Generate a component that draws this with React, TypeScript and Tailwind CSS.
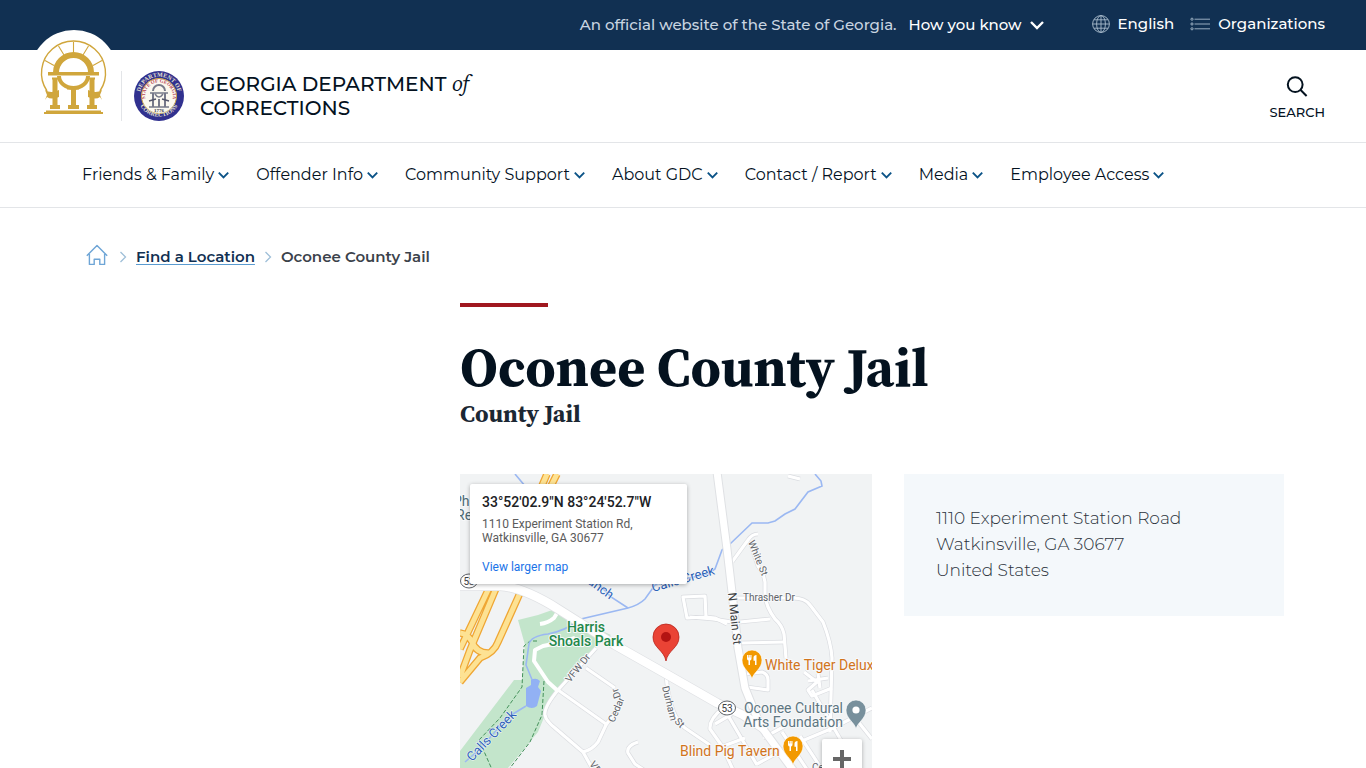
/**
 * Location page: state banner, department header, main navigation,
 * breadcrumb and the location details with an embedded map.
 */

import { clsx } from 'clsx'

const SANS = "font-['Montserrat','Inter',sans-serif]"
const SERIF = "font-['Source_Serif_Pro','Source_Serif_4','Liberation_Serif',serif]"

// ============================================
// Data
// ============================================

const NAV_ITEMS = [
  'Friends & Family',
  'Offender Info',
  'Community Support',
  'About GDC',
  'Contact / Report',
  'Media',
  'Employee Access',
]

const ADDRESS = ['1110 Experiment Station Road', 'Watkinsville, GA 30677', 'United States']

const MINOR_ROADS = [
  'M136 174 L98 216 Q84 233 85 241 Q86 247 95 254 L123 278 L133 296 L150 330',
  'M126 194 L155 214 M158 234 L146 251 L138 268 Q132 276 123 278',
  'M98 216 L146 250',
  'M178 268 Q166 272 168 279 L175 290 L190 300',
  'M298 60 Q292 60 288 66 L272 88',
  'M290 68 L298 92 Q304 100 305 108 L305 121 Q306 133 315 145 Q322 151 324 160 L326 184',
  'M275 124 L333 124 Q345 124 350 131 L363 148 Q371 168 372 184 L370 258',
  'M223 123 L245 122 L246 143 L227 144 Z M246 143 L255 144 L267 150',
  'M230 143 L253 145 L272 148 M280 148 L310 145',
  'M281 169 L325 168',
  'M286 200 L302 198 Q308 200 308 206 L308 216 L287 213',
  'M344 198 L357 208 L348 216 L352 222 L372 214 M348 207 L368 204 M358 200 L360 214',
  'M206 199 L207 210 Q211 243 225 254 L250 271',
  'M263 234 Q249 245 250 255 L262 272 L275 300',
  'M266 238 L297 291 M255 250 L272 240',
  'M258 274 L285 264 M297 290 L330 272 L373 254 L412 234',
  'M303 264 L325 252 M322 258 L350 300',
  'M352 216 L382 268 M392 240 L412 265',
  'M340 262 L365 300 M328 2 L340 5',
]

const CREEK = [
  'M55 0 L65 12 L90 60 L151 123 L168 134',
  'M355 0 L361 7 L362 12 L348 18 L335 35 L325 40 L315 47 L308 49 L292 49 L270 70 L262 76 L255 95 L248 100 L195 111 L185 125 Q179 131 168 134 L121 145 Q105 157 88 160 Q71 162 69 170 L66 191 L73 208',
  'M66 232 L48 243 L20 275 L5 288',
]

const HIGHWAY =
  'M97 0 L90 14 M87 0 L81 14 M37 112 L10 176 L0 203 M30 112 L0 175 M60 119 L38 168 Q34 179 20 184 L0 208 M0 159 Q8 160 12 168 Q17 180 30 179'

// ============================================
// Icons
// ============================================

function ChevronDown({ className }: { className?: string }) {
  return (
    <svg viewBox="0 0 14 10" className={className} fill="none" stroke="currentColor" strokeWidth="2.4" aria-hidden="true">
      <path d="M1 2 L7 8 L13 2" />
    </svg>
  )
}

function Separator() {
  return (
    <svg viewBox="0 0 8 12" className="h-3 w-2 text-[#9fbfd8]" fill="none" stroke="currentColor" strokeWidth="1.3" aria-hidden="true">
      <path d="M1.5 1 L6.5 6 L1.5 11" />
    </svg>
  )
}

function GlobeIcon() {
  return (
    <svg viewBox="0 0 18 18" className="size-[18px] text-[#a9bccd]" fill="none" stroke="currentColor" strokeWidth="0.9" aria-hidden="true">
      <circle cx="9" cy="9" r="8.4" />
      <ellipse cx="9" cy="9" rx="4.4" ry="8.4" />
      <path d="M9 .6V17.4M.6 9H17.4M1.8 4.8H16.2M1.8 13.2H16.2" />
    </svg>
  )
}

function ListIcon() {
  return (
    <svg viewBox="0 0 20 14" className="h-[14px] w-5 text-[#a9bccd]" fill="none" stroke="currentColor" strokeWidth="0.9" aria-hidden="true">
      <circle cx="2" cy="2.2" r="1.1" />
      <circle cx="2" cy="7" r="1.1" />
      <circle cx="2" cy="11.8" r="1.1" />
      <path d="M4.5 2.2H20M4.5 7H20M4.5 11.8H20" />
    </svg>
  )
}

function HomeIcon() {
  return (
    <svg viewBox="0 0 22 22" className="size-[22px] text-[#6ea5d6]" fill="none" stroke="currentColor" strokeWidth="1.4" strokeLinejoin="round" aria-hidden="true">
      <path d="M.8 11.8 L11 1.4 L21.2 11.8 M3.4 10 V20.4 H8.2 V15.2 H13.8 V20.4 H18.6 V10" />
    </svg>
  )
}

function SearchIcon() {
  return (
    <svg viewBox="0 0 22 22" className="size-[22px]" fill="none" stroke="currentColor" strokeWidth="2" aria-hidden="true">
      <circle cx="9.2" cy="8.6" r="7.4" />
      <path d="M14.4 13.8 L20.6 20" />
    </svg>
  )
}

// The arch with its three pillars, on the white disc
function GeorgiaLogo() {
  return (
    <svg viewBox="0 0 88 88" className="size-[88px]" aria-hidden="true">
      <circle cx="44" cy="44" r="44" fill="#fff" />
      <g fill="none" stroke="#d0a63c">
        <path d="M17 61 A32 32 0 1 1 70 61" strokeWidth="1.4" />
        <path d="M15 30.500 L24 35.500 M28.500 16 L34 25 M43.500 12 V24 M58.500 16 L53 25 M72 30.500 L63 35.500" strokeWidth="1.1" />
        <path d="M26 42.500 A17.500 17.500 0 0 1 61 42.500" strokeWidth="6" />
        <path d="M29 46 A14.500 12 0 0 0 58 46" strokeWidth="4" />
      </g>
      <g fill="#d0a63c">
        <path d="M18 42H69V45.500H18Z" />
        <path d="M22 47.500H29V49.500H27.500V75H22.500V49.500H22Z M58 47.500H65V49.500H64.500V75H59.500V49.500H58Z" />
        <path d="M37 56H49V59.500H46V75H41V59.500H37Z" />
        <path d="M20 75H30V79H20Z M38 75H49V79H38Z M57 75H67V79H57Z" />
        <path d="M16 80.500H71V82H73V84H14V82H16Z" />
        <path d="M15 60 Q21 64 29 60 V67 Q21 70 17 67 L15 70 L17 65Z M72 60 Q66 64 58 60 V67 Q66 70 70 67 L72 70 L70 65Z" />
      </g>
    </svg>
  )
}

function DepartmentSeal() {
  return (
    <svg viewBox="0 0 50 50" className="size-[50px]" aria-hidden="true">
      <defs>
        <path id="seal-top" d="M6.500 29 A19 19 0 1 1 43.500 29" />
        <path id="seal-bottom" d="M3.500 27 A21.700 21.700 0 0 0 46.500 27" />
        <path id="seal-inner" d="M14 34 A14 14 0 1 1 36 34" />
      </defs>
      <circle cx="25" cy="25" r="25" fill="#31318f" />
      <circle cx="25" cy="25" r="17.500" fill="#fbf8ef" stroke="#c9a548" strokeWidth="1" />
      <g fontFamily="Liberation Serif, serif" fontWeight="700">
        <text fontSize="6" fill="#e6e3d0"><textPath href="#seal-top" startOffset="50%" textAnchor="middle">DEPARTMENT OF</textPath></text>
        <text fontSize="6" fill="#e6e3d0"><textPath href="#seal-bottom" startOffset="50%" textAnchor="middle">CORRECTIONS</textPath></text>
        <text fontSize="5" fill="#b8475a"><textPath href="#seal-inner" startOffset="50%" textAnchor="middle">STATE OF GEORGIA</textPath></text>
        <text x="25" y="41" fontSize="5" fill="#38384a" textAnchor="middle">1776</text>
      </g>
      <g fill="none" stroke="#777989">
        <path d="M19 20 A6 6 0 0 1 31 20" strokeWidth="2" />
        <path d="M16 22H34M15 36H35" strokeWidth="1.500" />
        <path d="M19 22V36M31 22V36M25 28V36" strokeWidth="2" />
        <path d="M21 23 Q25 29 29 23" strokeWidth="1.500" />
        <path d="M15 30 L22 28 M28 28 L35 30" strokeWidth="1.500" stroke="#55576b" />
      </g>
    </svg>
  )
}

// ============================================
// Map
// ============================================

function Pin({ x, y, fill, kind }: { x: number; y: number; fill: string; kind: 'food' | 'dot' }) {
  return (
    <g transform={`translate(${x} ${y})`}>
      <path d="M0 19 C-1.500 12 -10 9 -10 0 A10 10 0 0 1 10 0 C10 9 1.500 12 0 19Z" fill={fill} stroke="#fff" strokeWidth=".6" />
      {kind === 'food' ? (
        <>
          <path d="M-5 -5H-.5V-1.500Q-.5 .3 -2 .5V5H-3.500V.5Q-5 .3 -5 -1.500Z" fill="#fff" />
          <path d="M-3.600 -5.200V-2.500M-1.900 -5.200V-2.500" stroke={fill} strokeWidth=".6" />
          <path d="M4.500 -5V5H3V.8H1.500V-2.500Q1.700 -5 4.500 -5Z" fill="#fff" />
        </>
      ) : (
        <circle r="3.600" fill="#fff" />
      )}
    </g>
  )
}

function RouteShield({ x, y, label }: { x: number; y: number; label: string }) {
  return (
    <g>
      <ellipse cx={x} cy={y} rx="8.500" ry="7" fill="#fff" stroke="#5f6368" />
      <text x={x} y={y + 4} fontSize="10" fill="#3c4043" textAnchor="middle">{label}</text>
    </g>
  )
}

function MapDrawing() {
  return (
    <svg viewBox="0 0 412 370" preserveAspectRatio="xMidYMin slice" className="h-full w-full" role="img" aria-label="Map of Watkinsville">
      <rect width="412" height="370" fill="#f1f3f4" />

      {/* park */}
      <path d="M58 146 L78 141 L95 135 L151 161 L141 168 L95 219 L85 241 L78 258 L48 294 L0 350 V277 L54 206 H62 L65 171 Z" fill="#c3e5cb" />
      <path d="M77 167 H70 L64 172 L62 213 L40 244 L19 266 L34 300 M84 207 L82 241 L70 268 L50 294" fill="none" stroke="#43915a" strokeWidth="1" strokeDasharray="4 2" />

      {/* water */}
      <g fill="none" stroke="#9bb8f2" strokeWidth="1.600">
        {CREEK.map((d) => <path key={d} d={d} />)}
      </g>
      <path d="M71 206 Q76 203 80 207 L78 213 L81 217 L77 232 Q72 236 66 232 V214 L71 211Z" fill="#92b1f4" />

      {/* side streets: grey casing, then white fill */}
      <g fill="none" stroke="#dadce0" strokeWidth="4.500" strokeLinejoin="round">
        {MINOR_ROADS.map((d) => <path key={d} d={d} />)}
      </g>
      <g fill="none" stroke="#fff" strokeWidth="3.200" strokeLinejoin="round">
        {MINOR_ROADS.map((d) => <path key={d} d={d} />)}
      </g>
      <path d="M115 164 L98 169 L83 172 L75 176 L74 187 L88 208 L98 217 M99 136 L94 144 Q88 149 80 150" fill="none" stroke="#fff" strokeWidth="4" strokeLinejoin="round" />

      {/* highway */}
      <g fill="none">
        <path d={HIGHWAY} stroke="#efa634" strokeWidth="7.500" />
        <path d={HIGHWAY} stroke="#fde293" strokeWidth="5" />
      </g>

      {/* main roads */}
      <g fill="none" strokeLinejoin="round">
        <path d="M0 112 H40 Q63 113 98 135 L155 171 L208 201 L257 229 L283 241 L306 256" stroke="#dfe1e4" strokeWidth="10" />
        <path d="M257 -2 L267 75 L272 118 L278 174 L285 214 L300 251 L333 296 L360 335" stroke="#dfe1e4" strokeWidth="9" />
        <path d="M0 112 H40 Q63 113 98 135 L155 171 L208 201 L257 229 L283 241 L306 256" stroke="#fff" strokeWidth="8.500" />
        <path d="M257 -2 L267 75 L272 118 L278 174 L285 214 L300 251 L333 296 L360 335" stroke="#fff" strokeWidth="7" />
      </g>

      <RouteShield x={9} y={107} label="53" />
      <RouteShield x={267} y={234} label="53" />

      {/* labels, haloed so they stay readable over the roads */}
      <g fontFamily="Roboto, sans-serif" stroke="#f8f9fa" strokeWidth="2" strokeLinejoin="round" style={{ paintOrder: 'stroke' }}>
        <g fontSize="14" fill="#4d6a75">
          <text x="-7" y="32">Ph</text>
          <text x="-4" y="46">Re</text>
        </g>
        <g fontSize="14" fontWeight="500" fill="#23884a" textAnchor="middle">
          <text x="126" y="158">Harris</text>
          <text x="126" y="172">Shoals Park</text>
        </g>
        <g fontSize="13" fill="#2c62b8" strokeWidth="1">
          <text transform="translate(127 109) rotate(36)">anch</text>
          <text transform="translate(193 118) rotate(-16)">Calls Creek</text>
          <text transform="translate(12 288) rotate(-46)">Calls Creek</text>
        </g>
        <g fontSize="10" fill="#5f6368">
          <text transform="translate(288 68) rotate(68)">White St</text>
          <text x="283" y="127">Thrasher Dr</text>
          <text transform="translate(110 209) rotate(-51)">VFW Dr</text>
          <text transform="translate(154 249) rotate(-66)">Cedar</text>
          <text transform="translate(161 223) rotate(-110)">Dr</text>
          <text transform="translate(202 213) rotate(76)">Durham</text>
          <text transform="translate(214 248) rotate(45)">St</text>
          <text transform="translate(129 290) rotate(55)">VFW Dr</text>
          <text x="352" y="297">Ce</text>
        </g>
        <text transform="translate(268 119) rotate(84)" fontSize="12" fill="#3c4043">N Main St</text>
        <g fontSize="14" fill="#d1741c">
          <text x="305" y="196">White Tiger Delux</text>
          <text x="220" y="282">Blind Pig Tavern</text>
        </g>
        <g fontSize="14" fill="#5d7681" textAnchor="end">
          <text x="383" y="239">Oconee Cultural</text>
          <text x="383" y="253">Arts Foundation</text>
        </g>
      </g>

      <Pin x={292} y={186} fill="#f29900" kind="food" />
      <Pin x={333} y={272} fill="#f29900" kind="food" />
      <Pin x={396} y={236} fill="#78909c" kind="dot" />

      <path d="M206 187 C204 176 193 174 193 163 A13 13 0 0 1 219 163 C219 174 208 176 206 187Z" fill="#ea4335" stroke="#b8231a" strokeWidth=".8" />
      <circle cx="206" cy="163" r="5" fill="#b31412" />
    </svg>
  )
}

function LocationMap() {
  return (
    <div className="relative h-[370px] min-w-0 flex-1 overflow-hidden font-['Roboto',sans-serif]">
      <MapDrawing />
      <div className="absolute top-[10px] left-[10px] h-[100px] w-[217px] rounded-xs bg-white px-3 py-[10px] shadow-[0_1px_4px_rgba(0,0,0,0.3)]">
        <p className="text-sm leading-4 font-medium whitespace-nowrap text-[#202124]">33°52'02.9"N 83°24'52.7"W</p>
        <p className="mt-[7px] text-xs leading-[14px] text-[#5b5b5b]">
          1110 Experiment Station Rd,
          <br />
          Watkinsville, GA 30677
        </p>
        <a href="#map" className="mt-[14px] block text-xs leading-4 text-[#1a73e8]">View larger map</a>
      </div>
      <div className="absolute top-[265px] right-[10px] flex w-10 flex-col divide-y divide-[#e6e6e6] rounded-xs bg-white text-[#666] shadow-[0_1px_4px_rgba(0,0,0,0.3)]">
        <button type="button" aria-label="Zoom in" className="flex h-10 items-center justify-center">
          <svg viewBox="0 0 18 18" className="size-[18px]" fill="currentColor"><path d="M7 0H11V7H18V11H11V18H7V11H0V7H7Z" /></svg>
        </button>
        <button type="button" aria-label="Zoom out" className="flex h-10 items-center justify-center">
          <svg viewBox="0 0 18 18" className="size-[18px]" fill="currentColor"><path d="M0 7H18V11H0Z" /></svg>
        </button>
      </div>
    </div>
  )
}

// ============================================
// Page sections
// ============================================

function TopBar() {
  return (
    <div className="flex h-[50px] items-center justify-end bg-[#113052] px-[41px] text-[15px] font-medium text-white">
      <p className="text-[#c9d5e1]">An official website of the State of Georgia.</p>
      <button type="button" className="ml-3 flex items-center gap-2 font-medium">
        How you know
        <ChevronDown className="h-[10px] w-[14px]" />
      </button>
      <div className="ml-12 flex items-center gap-4 pb-0.5">
        <a href="#english" className="flex items-center gap-2">
          <GlobeIcon />
          English
        </a>
        <a href="#organizations" className="flex items-center gap-2">
          <ListIcon />
          Organizations
        </a>
      </div>
    </div>
  )
}

function Header() {
  return (
    <header className="flex h-[93px] items-center border-b border-[#e3e5e8] pr-[41px] pl-[30px]">
      <a href="#home" className="relative -mt-11 shrink-0" aria-label="Georgia.gov">
        <GeorgiaLogo />
      </a>
      <span className="ml-[3px] h-[50px] w-px bg-[#e3e5e8]" />
      <a href="#gdc" className="ml-3 flex items-center gap-4">
        <DepartmentSeal />
        <span className="text-xl leading-6 font-medium text-[#04121f]">
          GEORGIA DEPARTMENT <em className={clsx(SERIF, 'text-[22px] leading-none font-normal')}>of</em>
          <br />
          CORRECTIONS
        </span>
      </a>
      <button type="button" className="ml-auto flex flex-col items-center gap-[6px] pt-1 text-[#04121f]">
        <SearchIcon />
        <span className="text-[13px] leading-4 font-medium">SEARCH</span>
      </button>
    </header>
  )
}

function MainNav() {
  return (
    <nav className="flex h-[65px] items-center gap-[27px] border-b border-[#e3e5e8] px-[82px]">
      {NAV_ITEMS.map((item) => (
        <button key={item} type="button" className="flex items-center gap-1 text-base whitespace-nowrap text-[#04121f]">
          {item}
          <ChevronDown className="h-2 w-[11px] text-[#0b5387]" />
        </button>
      ))}
    </nav>
  )
}

function Breadcrumb() {
  return (
    <nav aria-label="Breadcrumb" className="flex items-center gap-[9px] pl-1 text-[15px] leading-6 font-semibold text-[#3b424b]">
      <a href="#home" aria-label="Home" className="pr-0.5 pb-1">
        <HomeIcon />
      </a>
      <Separator />
      <a href="#locations" className="text-[#113052] underline decoration-[#5a9bd0] underline-offset-2">Find a Location</a>
      <Separator />
      <span>Oconee County Jail</span>
    </nav>
  )
}

export default function App() {
  return (
    <div className={clsx(SANS, 'min-h-screen bg-white')}>
      <TopBar />
      <Header />
      <MainNav />
      <main className="mx-auto w-full px-[82px] pt-9">
        <Breadcrumb />
        <div className="pt-[33px] pl-[378px]">
          <div className="h-1 w-[88px] bg-[#a0181f]" />
          <h1 className={clsx(SERIF, 'mt-7 text-[54px] leading-[64px] font-bold text-[#04121f]')}>Oconee County Jail</h1>
          <p className={clsx(SERIF, 'text-2xl leading-[30px] font-bold text-[#1b2733]')}>County Jail</p>
          <div className="mt-[45px] flex items-start gap-8">
            <LocationMap />
            <address className="w-[380px] bg-[#f4f8fb] px-8 pt-[31px] pb-[33px] text-[17px] leading-[26px] font-light text-[#2b333b] not-italic">
              {ADDRESS.map((line) => (
                <p key={line}>{line}</p>
              ))}
            </address>
          </div>
        </div>
      </main>
    </div>
  )
}
